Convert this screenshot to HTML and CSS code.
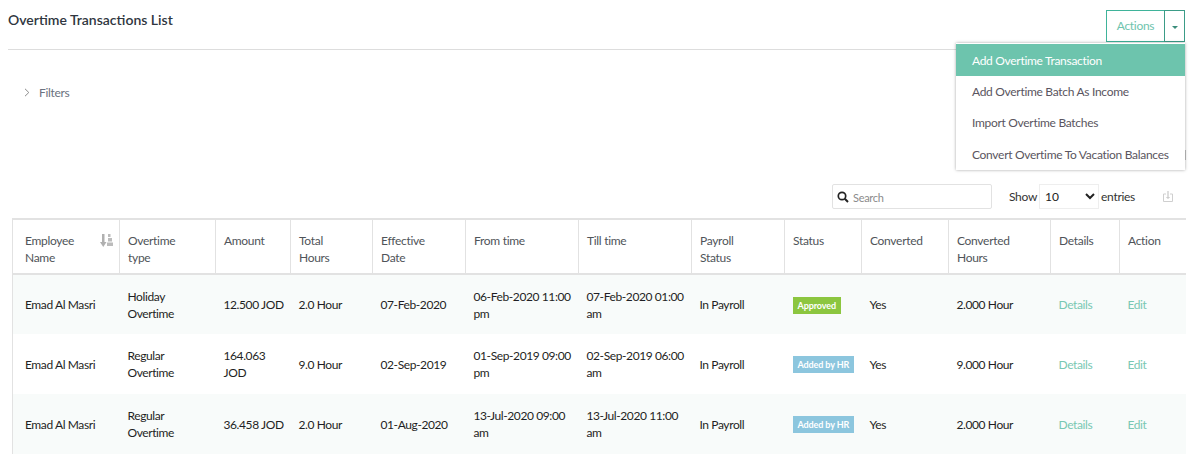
FILE: index.html
```html
<!DOCTYPE html>
<html lang="en">
<head>
<meta charset="utf-8">
<title>Overtime Transactions List</title>
<link rel="stylesheet" href="styles.css">
</head>
<body>
<header class="head">
  <h1 class="title">Overtime Transactions List</h1>
  <div class="actions">
    <button class="act-main">Actions</button>
    <button class="act-caret"><span class="caret"></span></button>
  </div>
  <ul class="menu">
    <li class="menu-item active">Add Overtime Transaction</li>
    <li class="menu-item">Add Overtime Batch As Income</li>
    <li class="menu-item">Import Overtime Batches</li>
    <li class="menu-item">Convert Overtime To Vacation Balances</li>
  </ul>
</header>
<div class="filters">
  <svg class="chev" width="6" height="9" viewBox="0 0 6 9"><path d="M1 .8 4.800 4.500 1 8.200" fill="none" stroke="#8a8a8a" stroke-width="1"/></svg>
  <span>Filters</span>
</div>
<div class="tools">
  <label class="search">
    <svg width="12" height="12" viewBox="0 0 12 12"><circle cx="5" cy="5" r="3.7" fill="none" stroke="#222" stroke-width="1.7"/><path d="M7.800 7.800 11 11" stroke="#222" stroke-width="2"/></svg>
    <span class="search-label">Search</span>
  </label>
  <span class="show">Show</span>
  <select class="len"><option>10</option></select>
  <span class="entries">entries</span>
  <svg class="export" width="10" height="11" viewBox="0 0 10 11"><path d="M3 3H.5v7.500h9V3H7" fill="none" stroke="#cfcfcf"/><path d="M5 0v7M3.500 6 5 7.500 6.500 6" fill="none" stroke="#bdbdbd"/></svg>
</div>
<table class="grid">
  <colgroup>
    <col class="c1"><col class="c2"><col class="c3"><col class="c4"><col class="c5"><col class="c6"><col class="c7"><col class="c8"><col class="c9"><col class="c10"><col class="c11"><col class="c12"><col class="c13">
  </colgroup>
  <thead>
    <tr>
      <th class="sortable">Employee Name
        <svg class="sort" width="13" height="13" viewBox="0 0 13 13"><path d="M2 0h2.500v8H6.500l-3.250 5L0 8h2z" fill="#b0b0b0"/><path d="M8 0h2.500v3H8zM8 4h4v3.500H8zM7 8.500h6V12H7z" fill="#bcbcbc"/></svg>
      </th>
      <th>Overtime type</th><th>Amount</th><th>Total Hours</th><th>Effective Date</th><th>From time</th><th>Till time</th><th>Payroll Status</th><th>Status</th><th>Converted</th><th>Converted Hours</th><th>Details</th><th>Action</th>
    </tr>
  </thead>
  <tbody>
    <tr class="odd">
      <td>Emad Al Masri</td><td>Holiday Overtime</td><td>12.500 JOD</td><td>2.0 Hour</td><td>07-Feb-2020</td><td>06-Feb-2020 11:00 pm</td><td>07-Feb-2020 01:00 am</td><td>In Payroll</td><td><span class="badge green">Approved</span></td><td>Yes</td><td>2.000 Hour</td><td class="link">Details</td><td class="link">Edit</td>
    </tr>
    <tr>
      <td>Emad Al Masri</td><td>Regular Overtime</td><td>164.063 JOD</td><td>9.0 Hour</td><td>02-Sep-2019</td><td>01-Sep-2019 09:00 pm</td><td>02-Sep-2019 06:00 am</td><td>In Payroll</td><td><span class="badge blue">Added by HR</span></td><td>Yes</td><td>9.000 Hour</td><td class="link">Details</td><td class="link">Edit</td>
    </tr>
    <tr class="odd">
      <td>Emad Al Masri</td><td>Regular Overtime</td><td>36.458 JOD</td><td>2.0 Hour</td><td>01-Aug-2020</td><td>13-Jul-2020 09:00 am</td><td>13-Jul-2020 11:00 am</td><td>In Payroll</td><td><span class="badge blue">Added by HR</span></td><td>Yes</td><td>2.000 Hour</td><td class="link">Details</td><td class="link">Edit</td>
    </tr>
  </tbody>
</table>
</body>
</html>
```
FILE: styles.css
```css
* { box-sizing: border-box; }
html, body { margin: 0; padding: 0; height: 457px; overflow: hidden; }
body { background: #fff; font-family: "Lato", "Noto Sans", sans-serif; font-size: 12px; letter-spacing: -.3px; color: #222; }

.head { position: relative; height: 50px; margin: 0 15px 0 8px; border-bottom: 1px solid #ddd; display: flex; justify-content: space-between; }
.title { margin: 11px 0 0; font-size: 14px; line-height: 17px; font-weight: 600; letter-spacing: 0; color: #2f3640; }
.actions { display: flex; height: 32px; margin: 10px 0 0; }
.act-main { width: 58px; background: #fff; border: 1px solid #3fb39a; border-right: 0; color: #6fc4ae; font: inherit; letter-spacing: inherit; padding: 0 0 2px; }
.act-caret { width: 21px; background: #fff; border: 1px solid #3b9c87; padding: 0; display: flex; align-items: center; justify-content: center; }
.caret { width: 0; height: 0; border: 3px solid transparent; border-top: 3px solid #3b8d7b; border-bottom: 0; margin-top: 2px; }

.menu { position: absolute; top: 43px; right: 0; width: 229px; height: 127px; margin: 0; padding: 1px 0 0; list-style: none; background: #fff; box-shadow: 0 0 3px rgba(0,0,0,.35); z-index: 2; }
.menu::after { content: ""; position: absolute; top: 107px; right: -1px; width: 1px; height: 10px; background: #a8a8a8; }
.menu-item { height: 31px; line-height: 31px; padding-left: 16px; color: #5a5560; white-space: nowrap; }
.menu-item.active { height: 32px; line-height: 33px; background: #6dc4ad; color: #fff; }
.menu-item:last-child { height: 32px; line-height: 33px; }

.filters { display: flex; align-items: center; gap: 9px; margin: 35px 0 0 24px; height: 14px; color: #6b7280; }
.chev { display: block; }

.tools { display: flex; align-items: center; height: 25px; margin: 85px 0 0 832px; }
.search { width: 160px; height: 25px; border: 1px solid #e2e2e2; border-radius: 2px; display: flex; align-items: center; gap: 4px; padding-left: 4px; color: #8b8b8b; font-size: 11px; }
.search-label { padding-top: 2px; }
.show { margin-left: 17px; color: #333; }
.len { width: 60px; height: 25px; margin-left: 2px; border: 1px solid #eee; background: #fff; font: inherit; color: #222; padding-left: 1px; }
.entries { margin-left: 2px; color: #333; }
.export { margin-left: 28px; }

.grid { width: 1173px; margin: 9px 0 0 12px; table-layout: fixed; border-collapse: collapse; border-top: 2px solid #e2e2e2; border-left: 1px solid #e2e2e2; }
.c1 { width: 107px; } .c2 { width: 96px; } .c3 { width: 75px; } .c4 { width: 82px; } .c5 { width: 93px; } .c6 { width: 113px; } .c7 { width: 113px; } .c8 { width: 93px; } .c9 { width: 77px; } .c10 { width: 87px; } .c11 { width: 102px; } .c12 { width: 69px; } .c13 { width: 66px; }
th { height: 55px; padding: 12px 24px 0 8px; text-align: left; vertical-align: top; font-weight: 400; color: #4f5459; line-height: 17px; border-right: 1px solid #e2e2e2; border-bottom: 2px solid #e2e2e2; }
th:first-child { padding-left: 12px; padding-right: 30px; }
th:last-child { border-right: 0; }
.sortable { position: relative; }
.sort { position: absolute; top: 14px; right: 6px; }
td { height: 60px; padding: 0 3px 0 8px; line-height: 17px; letter-spacing: -.4px; color: #1f1f24; vertical-align: middle; }
td:first-child { padding-left: 12px; white-space: nowrap; }
.odd td { background: #f8fbfa; }
td.link { color: #79c8b3; }
.badge { display: inline-block; padding: 0 5px; height: 17px; line-height: 17px; font-size: 9px; font-weight: 700; letter-spacing: -.1px; color: #fff; vertical-align: middle; white-space: nowrap; }
.green { background: #8cc63f; }
.blue { background: #8cc6de; }
```
